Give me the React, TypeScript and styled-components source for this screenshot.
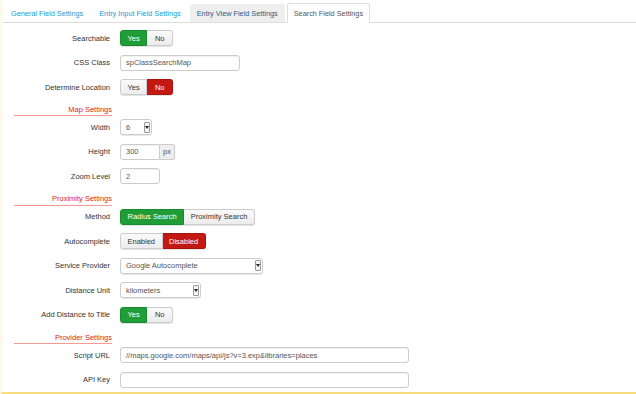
import React from 'react';
import styled, { createGlobalStyle, css } from 'styled-components';

const GlobalStyle = createGlobalStyle`
  body {
    margin: 0;
    background: #fff;
    font-family: "Liberation Sans", Arial, Helvetica, sans-serif;
    color: #333;
  }
`;

const Page = styled.div`
  width: 636px;
  height: 394px;
  box-sizing: border-box;
  border-left: 3px solid #fdf9ec;
  border-bottom: 2px solid #f6dc7c;
  overflow: hidden;
  font-size: 7.5px;
`;

const TabBar = styled.div`
  display: flex;
  align-items: flex-end;
  height: 23px;
  box-sizing: border-box;
  padding: 3px 0 0 1px;
  border-bottom: 1px solid #ddd;
`;

type TabKind = 'link' | 'hover' | 'active';

const Tab = styled.div<{ $kind: TabKind }>`
  height: 19px;
  line-height: 18px;
  padding: 0 6px;
  margin-right: 2px;
  margin-bottom: -1px;
  box-sizing: border-box;
  border: 1px solid transparent;
  border-radius: 3px 3px 0 0;
  color: #1a9bd7;
  font-size: 7.3px;
  ${({ $kind }) =>
    $kind === 'hover' &&
    css`
      background: #eee;
      color: #235f8c;
      border-color: #eee #eee #ddd;
    `}
  ${({ $kind }) =>
    $kind === 'active' &&
    css`
      background: #fff;
      color: #555;
      border-color: #ddd #ddd #fff;
      height: 20px;
      line-height: 19px;
    `}
`;

const Form = styled.div`
  display: flex;
  flex-direction: column;
  padding-top: 7px;
`;

const Row = styled.div`
  display: flex;
  align-items: center;
  height: 16px;
  margin-bottom: 8.6px;
`;

const Label = styled.div`
  width: 107px;
  margin-right: 10px;
  text-align: right;
  color: #333;
`;

const SectionHead = styled.div`
  width: 98px;
  margin-left: 11px;
  height: 12.5px;
  box-sizing: border-box;
  border-bottom: 1px solid #f39a94;
  margin-bottom: 3px;
  display: flex;
  align-items: flex-end;
  justify-content: flex-end;
  padding: 0 0 1.5px 0;
  color: #d8261c;
  line-height: 9px;
`;

const Group = styled.div`
  display: flex;
  height: 16px;
  border-radius: 3px;
  box-shadow: 0 1px 1px rgba(0, 0, 0, 0.12);
`;

type Tone = 'plain' | 'green' | 'red';

const GroupBtn = styled.div<{ $tone: Tone }>`
  min-width: 26px;
  box-sizing: border-box;
  padding: 0 6.5px;
  display: flex;
  align-items: center;
  justify-content: center;
  border: 1px solid #ccc;
  background: linear-gradient(#fafafa, #ececec);
  color: #333;
  & + & {
    border-left: none;
  }
  &:first-child {
    border-radius: 3px 0 0 3px;
  }
  &:last-child {
    border-radius: 0 3px 3px 0;
  }
  ${({ $tone }) =>
    $tone === 'green' &&
    css`
      background: #1f9e38;
      border-color: #1a8a30;
      color: #fff;
    `}
  ${({ $tone }) =>
    $tone === 'red' &&
    css`
      background: #c21a12;
      border-color: #a8150e;
      color: #fff;
    `}
`;

const Input = styled.div<{ $w: number }>`
  width: ${({ $w }) => $w}px;
  height: 16px;
  box-sizing: border-box;
  border: 1px solid #ccc;
  border-radius: 3px;
  padding-left: 5px;
  display: flex;
  align-items: center;
  color: #555;
  background: #fff;
  box-shadow: inset 0 1px 1px rgba(0, 0, 0, 0.06);
`;

const Append = styled.div`
  display: flex;
  height: 16px;
  ${Input} {
    border-radius: 3px 0 0 3px;
  }
`;

const AddOn = styled.div`
  width: 15px;
  box-sizing: border-box;
  border: 1px solid #ccc;
  border-left: none;
  border-radius: 0 3px 3px 0;
  background: #eee;
  color: #555;
  display: flex;
  align-items: center;
  justify-content: center;
`;

const Select = styled.div<{ $w: number }>`
  width: ${({ $w }) => $w}px;
  height: 16px;
  box-sizing: border-box;
  border: 1px solid #ccc;
  border-radius: 3px;
  padding: 0 1.5px 0 5px;
  display: flex;
  align-items: center;
  justify-content: space-between;
  color: #555;
  background: #fff;
  box-shadow: 0 1px 1px rgba(0, 0, 0, 0.1);
`;

const Arrow = styled.span`
  width: 6px;
  height: 11px;
  box-sizing: border-box;
  border: 1px solid #999;
  border-radius: 1px;
  background: #f4f4f4;
  display: flex;
  align-items: center;
  justify-content: center;
`;

function Toggle({ options, on }: { options: string[]; on: { index: number; tone: Tone } }) {
  return (
    <Group>
      {options.map((o, i) => (
        <GroupBtn key={o} $tone={i === on.index ? on.tone : 'plain'}>
          {o}
        </GroupBtn>
      ))}
    </Group>
  );
}

function Dropdown({ w, value }: { w: number; value: string }) {
  return (
    <Select $w={w}>
      <span>{value}</span>
      <Arrow>
        <svg width="4" height="3" viewBox="0 0 4 3">
          <path d="M0 0 H4 L2 3 Z" fill="#222" />
        </svg>
      </Arrow>
    </Select>
  );
}

function Field({ label, children }: { label: string; children: React.ReactNode }) {
  return (
    <Row>
      <Label>{label}</Label>
      {children}
    </Row>
  );
}

export default function App() {
  return (
    <>
      <GlobalStyle />
      <Page>
        <TabBar>
          <Tab $kind="link">General Field Settings</Tab>
          <Tab $kind="link">Entry Input Field Settings</Tab>
          <Tab $kind="hover">Entry View Field Settings</Tab>
          <Tab $kind="active">Search Field Settings</Tab>
        </TabBar>
        <Form>
          <Field label="Searchable">
            <Toggle options={['Yes', 'No']} on={{ index: 0, tone: 'green' }} />
          </Field>
          <Field label="CSS Class">
            <Input $w={120}>spClassSearchMap</Input>
          </Field>
          <Field label="Determine Location">
            <Toggle options={['Yes', 'No']} on={{ index: 1, tone: 'red' }} />
          </Field>

          <SectionHead>Map Settings</SectionHead>
          <Field label="Width">
            <Dropdown w={32} value="6" />
          </Field>
          <Field label="Height">
            <Append>
              <Input $w={40}>300</Input>
              <AddOn>px</AddOn>
            </Append>
          </Field>
          <Field label="Zoom Level">
            <Input $w={40}>2</Input>
          </Field>

          <SectionHead>Proximity Settings</SectionHead>
          <Field label="Method">
            <Toggle options={['Radius Search', 'Proximity Search']} on={{ index: 0, tone: 'green' }} />
          </Field>
          <Field label="Autocomplete">
            <Toggle options={['Enabled', 'Disabled']} on={{ index: 1, tone: 'red' }} />
          </Field>
          <Field label="Service Provider">
            <Dropdown w={143} value="Google Autocomplete" />
          </Field>
          <Field label="Distance Unit">
            <Dropdown w={81} value="kilometers" />
          </Field>
          <Field label="Add Distance to Title">
            <Toggle options={['Yes', 'No']} on={{ index: 0, tone: 'green' }} />
          </Field>

          <SectionHead>Provider Settings</SectionHead>
          <Field label="Script URL">
            <Input $w={289}>//maps.google.com/maps/api/js?v=3.exp&amp;libraries=places</Input>
          </Field>
          <Field label="API Key">
            <Input $w={289} />
          </Field>
        </Form>
      </Page>
    </>
  );
}
